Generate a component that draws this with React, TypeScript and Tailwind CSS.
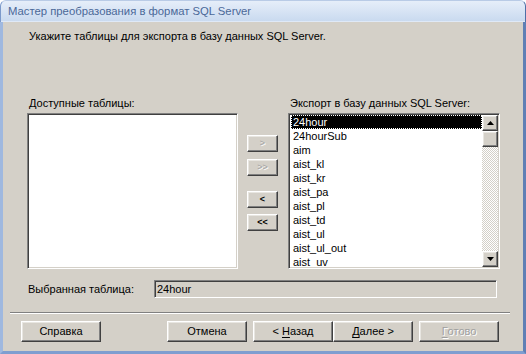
const font = "font-['Liberation_Sans',Arial,sans-serif]";

const raised =
  "border border-t-white border-l-white border-b-[#404040] border-r-[#404040] shadow-[inset_-1px_-1px_#808080,inset_1px_1px_#e8e6e1] bg-[#d4d0c8]";
const sunken =
  "border border-t-[#808080] border-l-[#808080] border-b-white border-r-white shadow-[inset_1px_1px_#404040,inset_-1px_-1px_#d4d0c8]";

const tables = [
  "24hour",
  "24hourSub",
  "aim",
  "aist_kl",
  "aist_kr",
  "aist_pa",
  "aist_pl",
  "aist_td",
  "aist_ul",
  "aist_ul_out",
  "aist_uv",
];

const MoveButton = ({ label, disabled }: { label: string; disabled?: boolean }) => (
  <div
    className={`${raised} w-[31px] h-[17px] flex items-center justify-center text-[9px] font-bold leading-none ${
      disabled ? "text-[#a0a0a0] [text-shadow:1px_1px_#fff] font-normal" : "text-black"
    }`}
  >
    {label}
  </div>
);

const Arrow = ({ down }: { down?: boolean }) => (
  <svg width="7" height="4" viewBox="0 0 7 4">
    {down ? <path d="M0 0h7L3.5 4z" fill="#000" /> : <path d="M0 4h7L3.5 0z" fill="#000" />}
  </svg>
);

const WizardButton = ({
  children,
  disabled,
  className = "",
}: {
  children: React.ReactNode;
  disabled?: boolean;
  className?: string;
}) => (
  <div
    className={`${raised} w-[80px] h-[21px] flex items-center justify-center text-[11px] ${
      disabled ? "text-[#a0a0a0] [text-shadow:1px_1px_#fff]" : "text-black"
    } ${className}`}
  >
    {children}
  </div>
);

export default function App() {
  return (
    <div className={`w-[526px] h-[354px] flex flex-col overflow-hidden bg-white ${font}`}>
      {/* title bar */}
      <div className="h-[22px] rounded-t-[6px] border-t border-l border-r border-t-[#b9cbe6] border-l-[#7c9acb] border-r-[#4f6fa6] bg-gradient-to-b from-[#e6eef9] to-[#c8d9ef] flex items-center pl-[7px] shadow-[inset_0_-1px_#dfe9f7]">
        <span className="text-[11.3px] text-[#4a6898] leading-none">
          Мастер преобразования в формат SQL Server
        </span>
      </div>

      {/* body */}
      <div className="flex-1 flex flex-col bg-[#d4d0c8] border-l-[3px] border-r-[3px] border-b-[3px] border-l-[#9fb8df] border-r-[#5f7fb5] border-b-[#7f9ed0] text-[11px] text-black">
        <p className="ml-[26px] mt-[8px] leading-[13px]">
          Укажите таблицы для экспорта в базу данных SQL Server.
        </p>

        <div className="flex ml-[24px] mt-[54px]">
          {/* available */}
          <div className="w-[211px] flex flex-col">
            <div className="pl-[2px] leading-[13px]">Доступные таблицы:</div>
            <div className={`${sunken} mt-[3px] h-[156px] bg-white`} />
          </div>

          {/* move buttons */}
          <div className="ml-[9px] flex flex-col pt-[38px]">
            <MoveButton label=">" disabled />
            <div className="mt-[7px]">
              <MoveButton label=">>" disabled />
            </div>
            <div className="mt-[15px]">
              <MoveButton label="<" />
            </div>
            <div className="mt-[6px]">
              <MoveButton label="<<" />
            </div>
          </div>

          {/* export list */}
          <div className="ml-[10px] w-[212px] flex flex-col">
            <div className="pl-[2px] leading-[13px]">Экспорт в базу данных SQL Server:</div>
            <div className={`${sunken} mt-[3px] h-[156px] bg-white flex p-[1px]`}>
              <div className="flex-1 flex flex-col overflow-hidden pl-[1px]">
                {tables.map((t, i) => (
                  <div
                    key={t}
                    className={`h-[14px] shrink-0 leading-[14px] pl-[2px] ${
                      i === 0
                        ? "bg-black text-white outline-1 outline-dotted outline-white -outline-offset-1"
                        : ""
                    }`}
                  >
                    {t}
                  </div>
                ))}
              </div>
              <div className="w-[16px] flex flex-col bg-[repeating-conic-gradient(#d4d0c8_0_25%,#ffffff_0_50%)] bg-[length:2px_2px]">
                <div className={`${raised} h-[16px] flex items-center justify-center`}>
                  <Arrow />
                </div>
                <div className={`${raised} h-[16px]`} />
                <div className="flex-1" />
                <div className={`${raised} h-[16px] flex items-center justify-center`}>
                  <Arrow down />
                </div>
              </div>
            </div>
          </div>
        </div>

        {/* selected table */}
        <div className="flex items-center ml-[25px] mt-[11px]">
          <div className="w-[126px] leading-[13px]">Выбранная таблица:</div>
          <div className={`${sunken} w-[343px] h-[18px] flex items-center pl-[2px] bg-[#d4d0c8]`}>
            24hour
          </div>
        </div>

        {/* separator */}
        <div className="ml-[7px] mt-[14px] w-[500px] border-t border-t-[#808080] border-b border-b-white" />

        {/* buttons */}
        <div className="flex ml-[18px] mt-[7px]">
          <WizardButton>Справка</WizardButton>
          <WizardButton className="ml-[66px]">Отмена</WizardButton>
          <WizardButton className="ml-[6px]">
            &lt;&nbsp;<span className="underline underline-offset-2">Н</span>азад
          </WizardButton>
          <WizardButton>
            <span className="underline underline-offset-2">Д</span>алее&nbsp;&gt;
          </WizardButton>
          <WizardButton className="ml-[6px]" disabled>
            <span className="underline underline-offset-2">Г</span>отово
          </WizardButton>
        </div>
      </div>
    </div>
  );
}
